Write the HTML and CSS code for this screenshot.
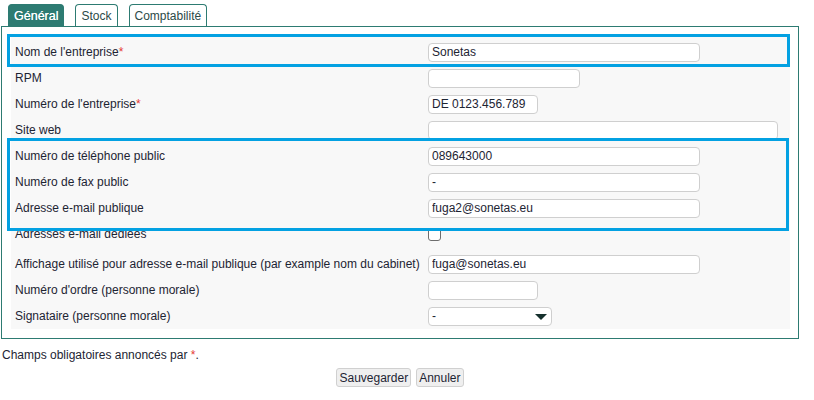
FILE: index.html
```html
<!DOCTYPE html>
<html lang="fr">
<head>
    <meta charset="UTF-8">
    <title>Entreprise</title>
    <link rel="stylesheet" href="styles.css">
</head>
<body>
    <div class="page">
        <div class="tabs">
            <span class="tab active">Général</span>
            <span class="tab">Stock</span>
            <span class="tab">Comptabilité</span>
        </div>
        <div class="panel">
            <table class="form">
                <tr class="first">
                    <td class="label">Nom de l'entreprise<span class="req">*</span></td>
                    <td><input type="text" class="w-l" value="Sonetas"></td>
                </tr>
                <tr>
                    <td class="label">RPM</td>
                    <td><input type="text" class="w-m"></td>
                </tr>
                <tr>
                    <td class="label">Numéro de l'entreprise<span class="req">*</span></td>
                    <td><input type="text" class="w-s" value="DE 0123.456.789"></td>
                </tr>
                <tr>
                    <td class="label">Site web</td>
                    <td><input type="text" class="w-xl"></td>
                </tr>
                <tr>
                    <td class="label">Numéro de téléphone public</td>
                    <td><input type="text" class="w-l" value="089643000"></td>
                </tr>
                <tr>
                    <td class="label">Numéro de fax public</td>
                    <td><input type="text" class="w-l" value="-"></td>
                </tr>
                <tr>
                    <td class="label">Adresse e-mail publique</td>
                    <td><input type="text" class="w-l" value="fuga2@sonetas.eu"></td>
                </tr>
                <tr>
                    <td class="label">Adresses e-mail dédiées</td>
                    <td><input type="checkbox" class="check"></td>
                </tr>
                <tr class="spaced">
                    <td class="label">Affichage utilisé pour adresse e-mail publique (par example nom du cabinet)</td>
                    <td><input type="text" class="w-l" value="fuga@sonetas.eu"></td>
                </tr>
                <tr>
                    <td class="label">Numéro d'ordre (personne morale)</td>
                    <td><input type="text" class="w-s"></td>
                </tr>
                <tr>
                    <td class="label">Signataire (personne morale)</td>
                    <td><span class="select-wrap"><select><option>-</option></select></span></td>
                </tr>
            </table>
            <div class="mark mark-name"></div>
            <div class="mark mark-contact"></div>
        </div>
        <p class="note">Champs obligatoires annoncés par <span class="req">*</span>.</p>
        <div class="buttons">
            <button>Sauvegarder</button>
            <button>Annuler</button>
        </div>
    </div>
</body>
</html>
```

FILE: styles.css
```css
body {
    margin: 0;
    padding: 0;
    font-family: "Liberation Sans", Arial, sans-serif;
    font-size: 12px;
    color: #1d2433;
    background: #fff;
}
.page {
    width: 798px;
    padding: 4px 0 0 1px;
}
.tabs {
    display: flex;
    gap: 11px;
    padding-left: 7px;
    height: 22px;
}
.tab {
    display: flex;
    align-items: center;
    padding: 0 5px;
    border: 1px solid #2d7b72;
    border-bottom: none;
    border-radius: 4px 4px 0 0;
    color: #2c4a48;
    background: #fff;
}
.tab.active {
    background: #2d7b72;
    color: #fff;
    padding: 0 5px;
    font-size: 12.5px;
    text-shadow: 0 0 0.4px #fff;
}
.panel {
    position: relative;
    border: 1px solid #2d7b72;
    padding: 10px 8px 9px 9px;
}
.form {
    width: 100%;
    border-collapse: collapse;
    background: #f8f8f8;
}
.form td {
    height: 26px;
    padding: 0;
    vertical-align: middle;
}
.form tr.first td {
    padding-top: 2px;
}
.form tr.spaced td {
    padding-top: 4px;
}
.form td.label {
    width: 413px;
    padding-left: 4px;
}
.req {
    color: #e53935;
}
input[type="text"], select {
    box-sizing: border-box;
    height: 19px;
    border: 1px solid #cfcfcf;
    border-radius: 4px;
    padding: 0 3px;
    font-family: inherit;
    font-size: 12px;
    color: #1d2433;
    background: #fff;
    vertical-align: middle;
}
.w-s { width: 110px; }
.w-m { width: 152px; }
.w-l { width: 272px; }
.w-xl { width: 350px; }
.check {
    appearance: none;
    width: 13px;
    height: 13px;
    margin: 0;
    border: 1px solid #6d6d6d;
    border-radius: 3px;
    background: #fff;
    vertical-align: middle;
}
.select-wrap {
    position: relative;
    display: inline-block;
}
.select-wrap select {
    appearance: none;
    width: 124px;
}
.select-wrap::after {
    content: "";
    position: absolute;
    right: 5px;
    top: 7px;
    border-left: 6px solid transparent;
    border-right: 6px solid transparent;
    border-top: 6px solid #15302d;
    pointer-events: none;
}
.mark {
    position: absolute;
    border: 3px solid #03a1e2;
    pointer-events: none;
}
.mark-name {
    left: 5px;
    top: 7px;
    width: 777px;
    height: 27px;
}
.mark-contact {
    left: 5px;
    top: 111px;
    width: 776px;
    height: 87px;
}
.note {
    margin: 9px 0 0 1px;
}
.buttons {
    display: flex;
    justify-content: center;
    gap: 5px;
    margin-top: 6px;
}
.buttons button {
    height: 19px;
    padding: 0 2px;
    border: 1px solid #d0d0d0;
    border-radius: 3px;
    background: #efefef;
    font-family: inherit;
    font-size: 12px;
    color: #1d2433;
}
```
